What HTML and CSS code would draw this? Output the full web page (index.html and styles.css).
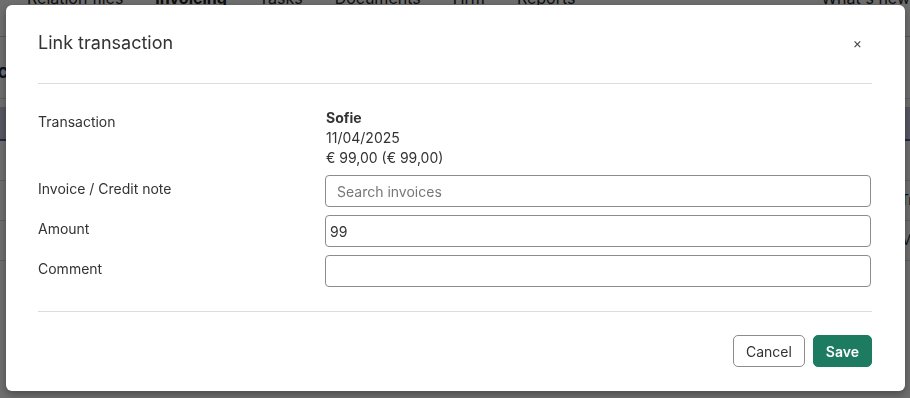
FILE: index.html
```html
<!DOCTYPE html>
<html>
<head>
<meta charset="UTF-8">
<title>Link transaction</title>
<link rel="stylesheet" href="styles.css">
</head>
<body>
	<div class="page">
		<div class="topnav">
			<span>Relation files</span>
			<span class="active">Invoicing</span>
			<span>Tasks</span>
			<span>Documents</span>
			<span>Hrm</span>
			<span>Reports</span>
			<span class="spacer"></span>
			<span>What's new</span>
		</div>
		<div class="subbar"><span class="pagetitle">Transactions</span></div>
		<div class="tablehead"></div>
		<div class="tablerow"></div>
		<div class="tablerow"><span class="rowtext">Transaction</span></div>
		<div class="tablerow"><span class="rowtext">Match</span></div>
	</div>

	<div class="backdrop"></div>

	<div class="modal">
		<div class="modalHeader">
			<h2>Link transaction</h2>
			<button type="button" class="closeButton">&times;</button>
		</div>
		<div class="modalBody">
			<div class="formRow">
				<label>Transaction</label>
				<div class="transaction">
					<strong>Sofie</strong>
					<span>11/04/2025</span>
					<span>&euro; 99,00 (&euro; 99,00)</span>
				</div>
			</div>
			<div class="formRow">
				<label>Invoice / Credit note</label>
				<input type="text" placeholder="Search invoices">
			</div>
			<div class="formRow">
				<label>Amount</label>
				<input type="text" value="99">
			</div>
			<div class="formRow">
				<label>Comment</label>
				<input type="text">
			</div>
		</div>
		<div class="modalFooter">
			<button type="button" class="btn btnCancel">Cancel</button>
			<button type="button" class="btn btnSave">Save</button>
		</div>
	</div>
</body>
</html>
```

FILE: styles.css
```css
* {
	box-sizing: border-box;
}

body {
	margin: 0px;
	font-family: Inter, "Noto Sans", sans-serif;
	font-size: 14px;
	color: #333333;
	background: #ffffff;
	width: 910px;
	height: 398px;
	overflow: hidden;
}

.page {
	height: 398px;
}

.topnav {
	display: flex;
	gap: 32px;
	padding: 0px 0px 0px 27px;
	margin-top: -12px;
	height: 49px;
	font-size: 16px;
	line-height: 20px;
	color: #222222;
	border-bottom: 1px solid #cccccc;
}

.topnav .active {
	font-weight: 700;
}

.topnav .spacer {
	flex: 1;
}

.subbar {
	height: 62px;
	padding-top: 22px;
	border-bottom: 1px solid #dddddd;
}

.pagetitle {
	margin-left: -70px;
	font-size: 20px;
	font-weight: 700;
	color: #1a2a44;
}

.tablehead {
	height: 34px;
	margin-top: 8px;
	background: #c9c9e6;
	border-bottom: 2px solid #5a5a9a;
}

.tablerow {
	height: 40px;
	border-bottom: 1px solid #dddddd;
	text-align: right;
}

.rowtext {
	display: inline-block;
	margin-right: -30px;
	padding-top: 10px;
	color: #1a2a44;
	width: 40px;
	text-align: left;
}

.backdrop {
	position: fixed;
	inset: 0px;
	background: rgba(0, 0, 0, 0.57);
}

.modal {
	position: fixed;
	left: 6px;
	top: 5px;
	width: 899px;
	height: 386px;
	background: #ffffff;
	border-radius: 6px;
	box-shadow: 0px 3px 8px rgba(0, 0, 0, 0.35);
	padding: 0px 33px 0px 32px;
	display: flex;
	flex-direction: column;
}

.modalHeader {
	display: flex;
	align-items: center;
	justify-content: space-between;
	height: 79px;
	border-bottom: 1px solid #dddddd;
	padding-bottom: 4px;
}

.modalHeader h2 {
	margin: 0px;
	font-size: 18px;
	font-weight: 400;
	color: #333333;
}

.closeButton {
	border: none;
	background: none;
	font-family: inherit;
	font-size: 14px;
	color: #444444;
	padding: 0px;
	margin-right: 10px;
	margin-top: 0px;
	cursor: pointer;
}

.modalBody {
	padding-top: 24px;
	height: 228px;
	border-bottom: 1px solid #dddddd;
}

.formRow {
	display: grid;
	grid-template-columns: 287px 1fr;
	margin-bottom: 8px;
}

.formRow label {
	padding-top: 4px;
	line-height: 20px;
}

.transaction {
	display: flex;
	flex-direction: column;
	line-height: 20px;
	padding-left: 1px;
	margin-bottom: -1px;
}

.transaction strong {
	font-weight: 700;
}

.formRow input {
	height: 32px;
	border: 1px solid #8c8c8c;
	border-radius: 4px;
	padding: 0px 10px 0px 4px;
	margin-right: 1px;
	font-family: inherit;
	font-size: 14px;
	color: #333333;
	outline: none;
}

.formRow input::placeholder {
	color: #777777;
	padding-left: 7px;
}

.modalFooter {
	display: flex;
	justify-content: flex-end;
	gap: 8px;
	padding-top: 23px;
}

.btn {
	height: 32px;
	border-radius: 5px;
	font-family: inherit;
	font-size: 14px;
	padding: 0px 12px;
	cursor: pointer;
}

.btnCancel {
	background: #ffffff;
	border: 1px solid #8c8c8c;
	color: #333333;
}

.btnSave {
	background: #1d7b62;
	border: 1px solid #1d7b62;
	color: #ffffff;
	font-weight: 600;
}
```
